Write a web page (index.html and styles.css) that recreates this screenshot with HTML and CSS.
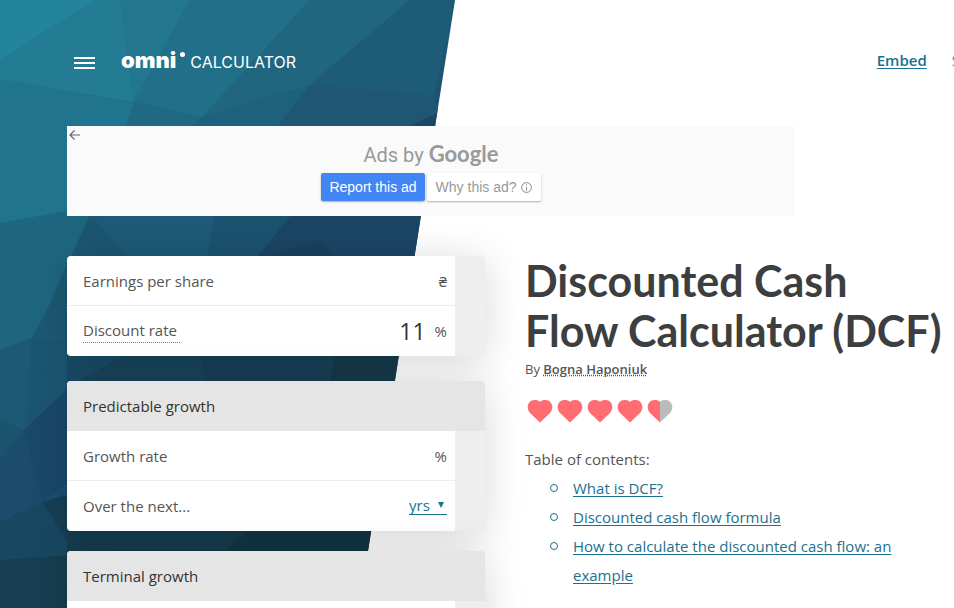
FILE: index.html
```html
<!DOCTYPE html>
<html lang="en">
<head>
<meta charset="utf-8">
<meta name="viewport" content="width=device-width, initial-scale=1">
<title>Discounted Cash Flow Calculator (DCF)</title>
<link rel="stylesheet" href="styles.css">
</head>
<body>
<svg class="backdrop" viewBox="0 0 455 608" aria-hidden="true">
  <defs>
    <linearGradient id="sea" x1="0" y1="0" x2="0.7" y2="1">
      <stop offset="0" stop-color="#21809a"/>
      <stop offset="0.35" stop-color="#1d6580"/>
      <stop offset="0.62" stop-color="#1a4d6e"/>
      <stop offset="0.8" stop-color="#173f54"/>
      <stop offset="1" stop-color="#123341"/>
    </linearGradient>
    <clipPath id="slant"><path d="M0 0H455L359 608H0z"/></clipPath>
  </defs>
  <g clip-path="url(#slant)">
    <path fill="url(#sea)" d="M0 0H455V608H0z"/>
    <path fill="#23849b" d="M0 0H95L0 60z"/>
    <path fill="#237b94" d="M95 0H120L134 102L0 79V60z"/>
    <path fill="#22768f" d="M120 0H190L134 102z"/>
    <path fill="#226f89" d="M190 0H310L202 117L134 102z"/>
    <path fill="#20667f" d="M310 0H410L310 85L202 117z"/>
    <path fill="#1d5b77" d="M410 0H455L434 96L310 85z"/>
    <path fill="#20748e" d="M0 79L134 102L126 126L90 216L67 211L0 223z"/>
    <path fill="#1f6982" d="M134 102L202 117L190 130H126z"/>
    <path fill="#1d617d" d="M202 117L310 85L277 126L190 130z"/>
    <path fill="#1f5674" d="M310 85L434 96L440 114L400 130H275z"/>
    <path fill="#1b4866" d="M440 112L400 130H440z"/>
    <path fill="#1e6680" d="M0 223L67 211L90 216L50 304L32 338L0 350z"/>
    <path fill="#1d5a77" d="M90 214H215L207 260H70z"/>
    <path fill="#1d5570" d="M90 214L130 260H70z"/>
    <path fill="#1b5270" d="M215 214H292L255 260H207z"/>
    <path fill="#1a4664" d="M292 214H425L415 260H255z"/>
    <path fill="#19425e" d="M320 240L335 260H255z"/>
    <path fill="#1d5873" d="M50 304L70 256V342L32 338z"/>
    <path fill="#1d5874" d="M0 350L32 338L24 430L0 420z"/>
    <path fill="#1c5571" d="M32 338L70 342V388L24 430z"/>
    <path fill="#1b526c" d="M0 420L24 430L0 461z"/>
    <path fill="#1b4c6c" d="M24 430L42 502L0 522V461z"/>
    <path fill="#1a486a" d="M24 430L70 386V480L42 502z"/>
    <path fill="#184861" d="M42 502L0 522V560L67 555V540z"/>
    <path fill="#173f55" d="M42 502L70 494V545z"/>
    <path fill="#173e51" d="M0 560L70 555V608H0z"/>
    <path fill="#1a4a67" d="M67 354H125L75 383H67z"/>
    <path fill="#18445c" d="M125 354H200L205 383H75z"/>
    <path fill="#183f56" d="M200 354H335L330 383H205z"/>
    <path fill="#163a4b" d="M335 354H405L395 383H330z"/>
    <path fill="#163d4f" d="M67 529H250L222 553H67z"/>
    <path fill="#133645" d="M250 529H375V553H222z"/>
  </g>
</svg>

<header class="top">
  <button class="menu" type="button" aria-label="Menu"><span></span><span></span><span></span></button>
  <a class="logo" href="#"><span class="omni">omni</span><span class="dot"></span><span class="calc">CALCULATOR</span></a>
  <nav class="nav"><a class="embed" href="#">Embed</a><a class="next" href="#">S</a></nav>
</header>

<section class="ad" aria-label="Advertisement">
  <button class="back" type="button" aria-label="Back">
    <svg width="12" height="12" viewBox="0 0 12 12" fill="none" stroke="#666" stroke-width="1.2"><path d="M11 6H1.5M5.5 1.5L1 6l4.500 4.500"/></svg>
  </button>
  <p class="adsby">Ads by <b>Google</b></p>
  <div class="adbuttons">
    <button class="report" type="button">Report this ad</button>
    <button class="why" type="button">Why this ad?
      <svg width="11" height="11" viewBox="0 0 11 11" fill="none" stroke="#888"><circle cx="5.500" cy="5.500" r="4.900"/><path d="M5.500 5v3.500M5.500 2.500v1.200"/></svg>
    </button>
  </div>
</section>

<main class="main">
  <form class="calculator">
    <fieldset class="group">
      <div class="row"><label for="eps">Earnings per share</label><input id="eps" type="text"><span class="unit">₴</span></div>
      <div class="row"><label for="rate"><span class="hint">Discount rate</span></label><input id="rate" type="text" value="11"><span class="unit">%</span></div>
    </fieldset>
    <fieldset class="group">
      <h2 class="title">Predictable growth</h2>
      <div class="row"><label for="growth">Growth rate</label><input id="growth" type="text"><span class="unit">%</span></div>
      <div class="row"><label for="years">Over the next...</label><input id="years" type="text">
        <span class="picker"><select aria-label="Time unit"><option>yrs</option></select><svg width="6" height="6" viewBox="0 0 6 6"><path fill="#1b7190" d="M0 0h6L3 6z"/></svg></span></div>
    </fieldset>
    <fieldset class="group">
      <h2 class="title">Terminal growth</h2>
      <div class="row"><input type="text" aria-label="Terminal growth rate"></div>
    </fieldset>
  </form>

  <article class="article">
    <h1>Discounted Cash Flow Calculator (DCF)</h1>
    <p class="by">By <a href="#">Bogna Haponiuk</a></p>
    <div class="hearts" role="img" aria-label="Rating">
      <svg viewBox="0 0 26 24"><path class="full" d="M13 23.500L3 14C-2 8 2 1 7 1c3 0 5 .5 6 2 1-1.500 3-2 6-2 5 0 9 7 4 13z"/></svg>
      <svg viewBox="0 0 26 24"><path class="full" d="M13 23.500L3 14C-2 8 2 1 7 1c3 0 5 .5 6 2 1-1.500 3-2 6-2 5 0 9 7 4 13z"/></svg>
      <svg viewBox="0 0 26 24"><path class="full" d="M13 23.500L3 14C-2 8 2 1 7 1c3 0 5 .5 6 2 1-1.500 3-2 6-2 5 0 9 7 4 13z"/></svg>
      <svg viewBox="0 0 26 24"><path class="full" d="M13 23.500L3 14C-2 8 2 1 7 1c3 0 5 .5 6 2 1-1.500 3-2 6-2 5 0 9 7 4 13z"/></svg>
      <svg viewBox="0 0 26 24"><path class="full" d="M13 23.500L3 14C-2 8 2 1 7 1c3 0 5 .5 6 2z"/><path class="empty" d="M13 23.500V3c1-1.500 3-2 6-2 5 0 9 7 4 13z"/></svg>
    </div>
    <p class="toc">Table of contents:</p>
    <ul class="links">
      <li><a href="#">What is DCF?</a></li>
      <li><a href="#">Discounted cash flow formula</a></li>
      <li><a href="#">How to calculate the discounted cash flow: an example</a></li>
    </ul>
  </article>
</main>
</body>
</html>
```
FILE: styles.css
```css
*, *::before { box-sizing: border-box; }
html { height: 100%; overflow: hidden; }
body {
  margin: 0;
  height: 100%;
  overflow: hidden;
  position: relative;
  background: #fff;
  color: #555;
  font: 15px/20px "Open Sans", "Noto Sans", sans-serif;
}
h1, h2, p, ul { margin: 0; }
button { font: inherit; border: 0; padding: 0; background: none; cursor: pointer; }
svg { display: block; }

.backdrop { position: absolute; top: 0; left: 0; width: 455px; z-index: -1; }

.top { display: flex; align-items: center; height: 126px; padding: 0 0 2px 74px; }
.menu { display: grid; gap: 3px; width: 21px; margin-top: 2px; }
.menu span { height: 2px; background: #fff; }
.logo { display: flex; align-items: center; margin-left: 26px; color: #fff; text-decoration: none; }
.omni { font: 900 22px/24px Inter, sans-serif; margin-top: -4px; }
.dot { width: 5px; height: 5px; margin: 0 5px 16px 4px; border-radius: 50%; background: #fff; }
.calc { font: 16px/20px Inter, sans-serif; }
.nav { display: flex; gap: 25px; margin: 0 -6px 4px auto; line-height: 20px; }
.embed { color: #1b7190; font-weight: 600; text-underline-offset: 2px; }
.next { color: #777; text-decoration: none; }

.ad {
  position: relative;
  width: 728px;
  max-width: 100%;
  height: 90px;
  margin-left: 67px;
  padding-top: 14px;
  background: #fafafa;
  font-family: "Liberation Sans", sans-serif;
  text-align: center;
}
.back { position: absolute; top: 3px; left: 2px; }
.adsby { color: #999; font: 20px/27px Roboto, sans-serif; }
.adsby b { font: 700 22px/27px Lato, sans-serif; color: #999; }
.adbuttons { display: flex; justify-content: center; gap: 2px; margin-top: 4px; font-size: 14px; line-height: 28px; }
.adbuttons button { display: flex; align-items: center; gap: 4px; padding: 0 9px; height: 28px; border-radius: 2px; box-shadow: 0 1px 2px rgba(0, 0, 0, .3); white-space: nowrap; }
.adbuttons .report { padding: 0 8px; background: #4285f4; color: #fff; }
.why { background: #fff; color: #999; }

.main { display: grid; grid-template-columns: 418px minmax(0, 1fr); gap: 40px; margin: 40px 12px 0 67px; }
.group {
  min-width: 0;
  margin: 0 0 20px;
  padding: 0;
  border: 0;
  border-radius: 4px;
  background: linear-gradient(to left, #eee 30px, #fff 30px);
  box-shadow: 0 5px 40px rgba(0, 0, 0, .16);
  overflow: hidden;
}
.group:first-child { margin-bottom: 25px; }
.title { height: 50px; padding-left: 16px; background: #e5e5e5; color: #333; font-size: 15px; font-weight: 400; line-height: 50px; }
.row { display: flex; align-items: center; height: 50px; margin-right: 30px; padding: 0 8px 0 16px; border-bottom: 1px solid #eee; }
.row:last-child { border-bottom-color: transparent; }
.row label { flex: none; }
.hint { display: block; padding-right: 3px; line-height: 24px; border-bottom: 1px dotted #777; }
.row input { flex: 1; min-width: 0; padding: 0; border: 0; outline: 0; background: none; color: #333; font: 23px/30px "Open Sans", sans-serif; text-align: right; }
.unit { margin-left: 9px; }
.picker { display: flex; align-items: center; width: 38px; border-bottom: 1px solid #1b7190; line-height: 18px; }
.picker svg { margin-left: 8px; }
select { appearance: none; padding: 0; border: 0; outline: 0; background: none; color: #1b7190; font: inherit; }

h1 { color: #3c3e40; font: 700 43px/50px Lato, sans-serif; }
.by { margin-top: 3px; font-size: 13px; line-height: 20px; }
.by a { color: inherit; font-weight: 600; text-decoration: underline dotted; }
.hearts { display: flex; gap: 4px; margin: 20px 0 0 2px; }
.hearts svg { width: 26px; height: 24px; }
.full { fill: #ff6c72; }
.empty { fill: #bbb; }
.toc { margin-top: 22px; line-height: 29px; }
.links { padding-left: 24px; line-height: 29px; list-style: none; }
.links li { display: flex; gap: 15px; }
.links li::before { content: ""; flex: none; width: 8px; height: 8px; margin: 10px 0 0 1px; border: 1px solid #1b7190; border-radius: 50%; }
.links a { color: #1b7190; text-underline-offset: 2px; }
```
